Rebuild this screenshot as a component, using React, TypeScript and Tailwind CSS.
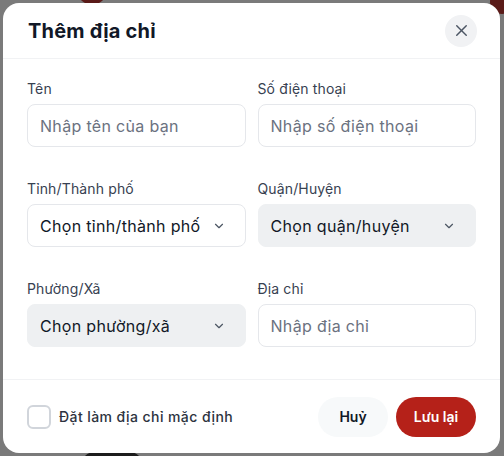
import { ChevronDown, X } from "lucide-react";

const font = { fontFamily: "Inter, 'Noto Sans', sans-serif" };

function Field({ label, children }: { label: string; children: React.ReactNode }) {
  return (
    <div className="flex flex-col gap-[5px]">
      <label className="text-sm leading-5 tracking-[0.01em] text-[#374151]">{label}</label>
      {children}
    </div>
  );
}

function TextInput({ placeholder }: { placeholder: string }) {
  return (
    <input
      placeholder={placeholder}
      className="h-[43px] w-full rounded-lg border border-[#e5e7eb] bg-white px-3 text-base tracking-[0.02em] text-[#111827] outline-none placeholder:text-[#6b7280]"
    />
  );
}

function Select({ value, disabled }: { value: string; disabled?: boolean }) {
  return (
    <button
      className={
        "flex h-[43px] w-full items-center justify-between rounded-lg border pl-3 pr-[19px] text-base tracking-[0.02em] text-[#111827] " +
        (disabled ? "border-[#eef0f2] bg-[#eef0f2]" : "border-[#e5e7eb] bg-white")
      }
    >
      <span>{value}</span>
      <ChevronDown size={14} strokeWidth={2} className="text-[#4b5563]" />
    </button>
  );
}

export default function App() {
  return (
    <div className="relative h-[456px] w-[504px] overflow-hidden bg-[#7a7a7a]" style={font}>
      {/* bits of the page behind the backdrop */}
      <div className="absolute left-[78px] top-[-20px] h-6 w-[28px] rounded-full bg-[#5a1a18]" />
      <div className="absolute right-[-10px] top-[-10px] h-6 w-6 rounded-full bg-[#5a1a18]" />
      <div className="absolute bottom-[-20px] left-[82px] h-6 w-[60px] rounded-full bg-[#1c1c1c]" />

      <div className="relative ml-[3px] mt-[3px] flex h-[450px] w-[497px] flex-col rounded-2xl bg-white">
        <div className="flex h-14 items-center justify-between border-b border-[#f1f2f4] pl-[25px] pr-[23px]">
          <h2 className="text-xl font-bold tracking-[0.01em] text-[#111827]">Thêm địa chỉ</h2>
          <button className="flex h-8 w-8 items-center justify-center rounded-full bg-[#f1f2f4] text-[#4b5563]">
            <X size={19} strokeWidth={1.8} />
          </button>
        </div>

        <div className="grid grid-cols-2 gap-x-3 gap-y-8 px-6 pb-8 pt-5">
          <Field label="Tên">
            <TextInput placeholder="Nhập tên của bạn" />
          </Field>
          <Field label="Số điện thoại">
            <TextInput placeholder="Nhập số điện thoại" />
          </Field>
          <Field label="Tỉnh/Thành phố">
            <Select value="Chọn tỉnh/thành phố" />
          </Field>
          <Field label="Quận/Huyện">
            <Select value="Chọn quận/huyện" disabled />
          </Field>
          <Field label="Phường/Xã">
            <Select value="Chọn phường/xã" disabled />
          </Field>
          <Field label="Địa chỉ">
            <TextInput placeholder="Nhập địa chỉ" />
          </Field>
        </div>

        <div className="flex flex-1 items-center justify-between border-t border-[#f1f2f4] px-6">
          <label className="flex items-center gap-2">
            <span className="h-6 w-6 rounded-md border-2 border-[#d1d5db] bg-white" />
            <span className="text-sm font-medium tracking-[0.03em] text-[#2d3340]">Đặt làm địa chỉ mặc định</span>
          </label>
          <div className="flex gap-2">
            <button className="h-10 w-[70px] rounded-full bg-[#f7f9fa] text-sm font-semibold text-[#111827]">
              Huỷ
            </button>
            <button className="h-10 w-[80px] rounded-full bg-[#b52119] text-sm font-semibold text-white">
              Lưu lại
            </button>
          </div>
        </div>
      </div>
    </div>
  );
}
